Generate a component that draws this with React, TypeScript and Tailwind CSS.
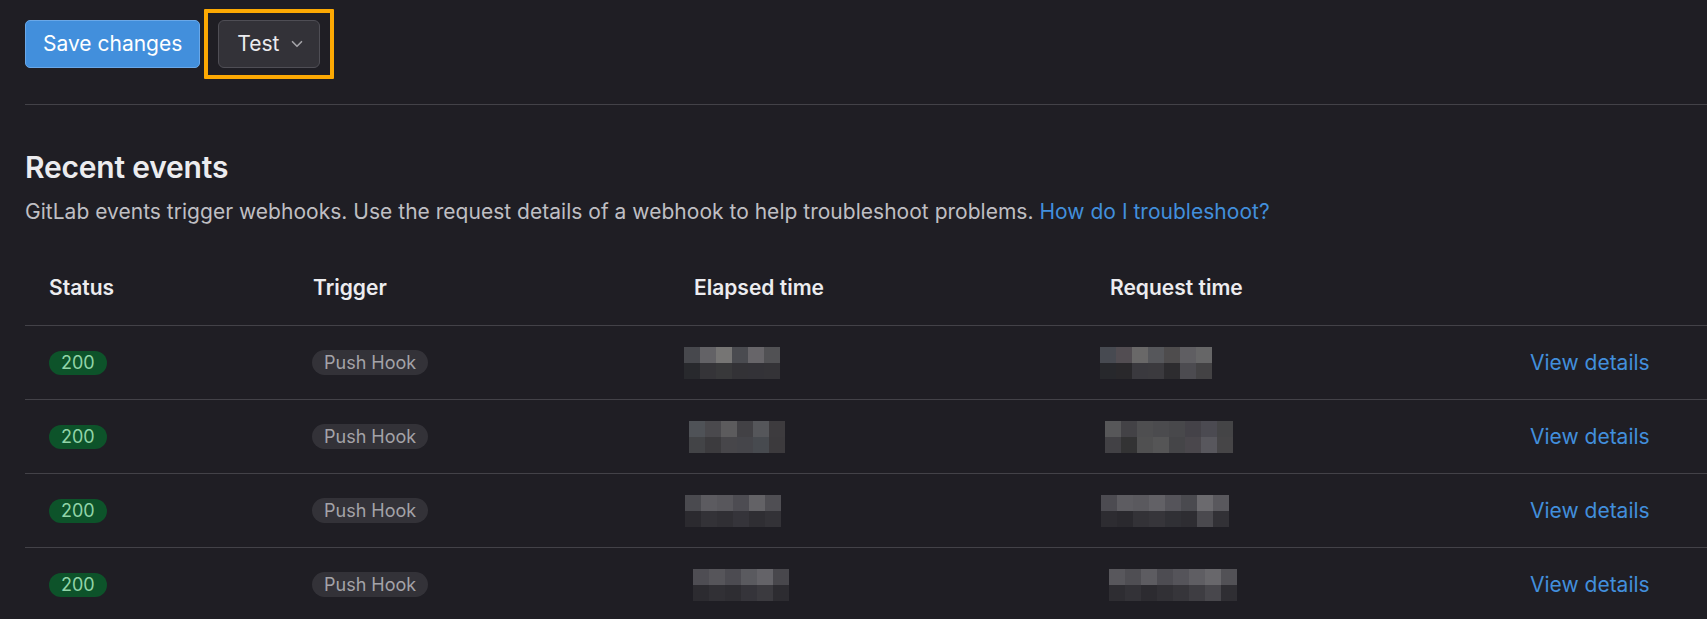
import { ChevronDown } from "lucide-react";

type Row = {
  shift: string;
  elapsed: string[][];
  request: string[][];
};

const rows: Row[] = [
  {
    shift: "-ml-[10px]",
    elapsed: [
      ["#47484d", "#636266", "#767574", "#4a4b50", "#676569", "#515154"],
      ["#28292d", "#353438", "#38383a", "#333236", "#333237", "#343337"],
    ],
    request: [
      ["#474a51", "#524d52", "#696868", "#56575b", "#4e4c4d", "#5f5e62", "#666667"],
      ["#27282c", "#29282b", "#3a393e", "#3b3a3e", "#2d2c2f", "#4c4b50", "#434244"],
    ],
  },
  {
    shift: "-ml-[5px]",
    elapsed: [
      ["#4f5257", "#4a494d", "#5c5b5d", "#424145", "#55565a", "#3d3b3e"],
      ["#434447", "#3c3b3e", "#47464a", "#45454a", "#474a4f", "#3c3a3d"],
    ],
    request: [
      ["#575759", "#434246", "#4e4e50", "#4b4b4e", "#48484b", "#444248", "#4b4a51", "#444446"],
      ["#424145", "#333334", "#505051", "#555556", "#454548", "#4a474c", "#58575d", "#464547"],
    ],
  },
  {
    shift: "-ml-[9px]",
    elapsed: [
      ["#4a4a4f", "#5c5b60", "#58575c", "#4d4c52", "#636266", "#4f4e53"],
      ["#2b2a2f", "#333237", "#302f34", "#35343a", "#2f2e33", "#333237"],
    ],
    request: [
      ["#4c4b51", "#5d5c61", "#5a595e", "#626166", "#55545a", "#4a4a4f", "#6b6a6e", "#59585d"],
      ["#2d2c31", "#2a292e", "#333237", "#36353a", "#303035", "#2e2d32", "#4a494e", "#323136"],
    ],
  },
  {
    shift: "-ml-[1px]",
    elapsed: [
      ["#4e4d53", "#56555a", "#4c4b51", "#5a5a5f", "#646368", "#48474c"],
      ["#2c2b30", "#313035", "#2e2d32", "#35343a", "#3b3a3f", "#2d2c31"],
    ],
    request: [
      ["#58575c", "#4f4e53", "#5d5c61", "#4d4c52", "#55545a", "#5f5e63", "#68676b", "#525156"],
      ["#2e2d32", "#333237", "#2c2b30", "#313035", "#36353a", "#3e3d42", "#48474c", "#2f2e33"],
    ],
  },
];

function Pixels({ grid, shift }: { grid: string[][]; shift: string }) {
  return (
    <div className={`flex flex-col ${shift}`}>
      {grid.map((line, i) => (
        <div key={i} className="flex">
          {line.map((c, j) => (
            <div key={j} className="h-4 w-4" style={{ backgroundColor: c }} />
          ))}
        </div>
      ))}
    </div>
  );
}

const cols = "grid grid-cols-[264px_381px_416px_420px_1fr]";

export default function App() {
  return (
    <div className="min-h-screen w-full overflow-hidden bg-[#1f1e24] pl-[25px] pt-5 font-['Inter',sans-serif] text-[#ececef]">
      <div className="flex items-center">
        <button className="h-12 rounded-[5px] border border-[#6aa8e8] bg-[#428fdc] px-[17px] text-[21px] text-white">
          Save changes
        </button>
        <div className="ml-[4px] -my-[11px] rounded-[1px] border-4 border-[#fca903] px-[10px] py-[7px]">
          <button className="flex h-12 w-[102px] items-center gap-[9px] rounded-[6px] border border-[#4f4e55] bg-[#333238] pl-[18px] text-[21px] text-[#ececef]">
            Test
            <ChevronDown className="h-[18px] w-[18px] text-[#a4a3a8]" strokeWidth={2.2} />
          </button>
        </div>
      </div>

      <div className="mt-9 h-px bg-[#434248]" />

      <h2 className="mt-11 text-[30px] font-semibold leading-[36px] tracking-[-0.2px] text-[#ececef]">
        Recent events
      </h2>
      <p className="mt-[11px] text-[21px] leading-[32px] tracking-[0.02px] text-[#bfbfc3]">
        GitLab events trigger webhooks. Use the request details of a webhook to help troubleshoot problems.{" "}
        <a className="text-[#428fdc]">How do I troubleshoot?</a>
      </p>

      <div className="mt-[23px]">
        <div className={`${cols} h-[74px] items-center text-[21px] font-semibold`}>
          <div className="pl-6">Status</div>
          <div className="pl-6">Trigger</div>
          <div className="pl-6">Elapsed time</div>
          <div className="pl-6">Request time</div>
          <div />
        </div>
        {rows.map((r, i) => (
          <div key={i} className={`${cols} h-[74px] items-center border-t border-[#434248]`}>
            <div className="pl-6">
              <span className="inline-block rounded-full bg-[#0d532a] px-3 text-[18px] leading-6 text-[#91d4a8]">
                200
              </span>
            </div>
            <div className="pl-[23px]">
              <span className="inline-block rounded-full bg-[#333238] px-3 pt-px text-[18px] leading-6 text-[#a4a3a8]">
                Push Hook
              </span>
            </div>
            <div className="pl-6">
              <Pixels grid={r.elapsed} shift={r.shift} />
            </div>
            <div className="pl-6">
              <Pixels grid={r.request} shift={r.shift} />
            </div>
            <div className="pl-6">
              <a className="text-[21px] text-[#428fdc]">View details</a>
            </div>
          </div>
        ))}
      </div>
    </div>
  );
}
